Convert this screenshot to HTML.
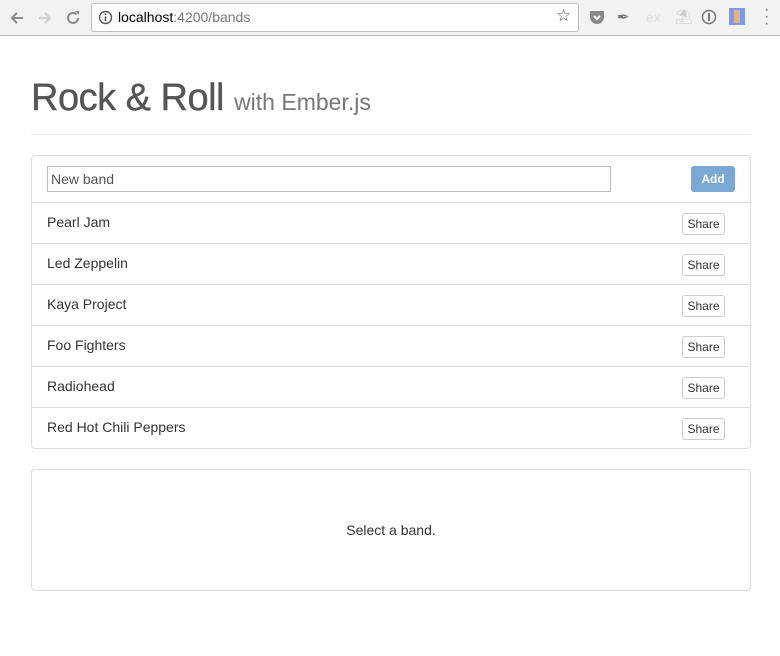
<!DOCTYPE html>
<html><head><style>
*{box-sizing:border-box}
body{margin:0;width:780px;height:656px;background:#fff;font-family:"Liberation Sans",sans-serif;color:#333;position:relative;overflow:hidden}
.bar{position:absolute;left:0;top:0;width:780px;height:36px;background:#f2f2f2;border-bottom:1px solid #b9b9b9}
.url{position:absolute;left:91px;top:3px;width:488px;height:29px;background:#fff;border:1px solid #bfbfbf;border-radius:3px;font-size:14px;line-height:27px;padding-left:26px;color:#000}
.url span{color:#777}
.abs{position:absolute}
h1{position:absolute;left:31px;top:76px;margin:0;font-size:38px;font-weight:normal;color:#555;letter-spacing:-0.5px;line-height:44px;-webkit-text-stroke:0.4px #555}
h1 small{font-size:23px;color:#777;letter-spacing:0;-webkit-text-stroke:0}
.hr{position:absolute;left:31px;top:134px;width:720px;height:1px;background:#eee}
.panel{position:absolute;left:31px;width:720px;border:1px solid #ddd;border-radius:4px}
.row{height:41px;border-top:1px solid #ddd;position:relative;font-size:14px;line-height:39px;padding-left:15px}
.share{position:absolute;left:650px;top:10px;width:43px;height:22px;border:1px solid #ccc;border-radius:3px;font-size:12px;line-height:20px;text-align:center;background:#fff;color:#333}
</style></head><body>
<div class="bar">
<svg class="abs" style="left:8px;top:9px" width="18" height="18" viewBox="0 0 18 18"><path d="M15 9H4M9 4L4 9l5 5" stroke="#8a8a8a" stroke-width="2" fill="none"/></svg>
<svg class="abs" style="left:36px;top:9px" width="18" height="18" viewBox="0 0 18 18"><path d="M3 9h11M9 4l5 5-5 5" stroke="#cfcfcf" stroke-width="2" fill="none"/></svg>
<svg class="abs" style="left:64px;top:9px" width="18" height="18" viewBox="0 0 18 18"><path d="M14 9a5 5 0 1 1-1.5-3.6" stroke="#8a8a8a" stroke-width="2" fill="none"/><path d="M11 2h4v4z" fill="#8a8a8a"/></svg>
<div class="url">localhost<span>:4200/bands</span></div>
<svg class="abs" style="left:98px;top:10px" width="15" height="15" viewBox="0 0 15 15"><circle cx="7.5" cy="7.5" r="6" stroke="#555" stroke-width="1.4" fill="none"/><path d="M7.5 6.5v4.5" stroke="#555" stroke-width="1.6"/><circle cx="7.5" cy="4.3" r="1" fill="#555"/></svg>
<div class="abs" style="left:556px;top:6px;font-size:17px;color:#555">☆</div>
<svg class="abs" style="left:589px;top:9px" width="16" height="16" viewBox="0 0 16 16"><path d="M1 2h14v6a7 7 0 0 1-14 0z" fill="#888"/><path d="M5 7l3 3 3-3" stroke="#fff" stroke-width="2" fill="none"/></svg>
<div class="abs" style="left:617px;top:8px;font-size:15px;color:#777">✒</div>
<div class="abs" style="left:646px;top:9px;font-size:14px;color:#ddd">ex</div>
<div class="abs" style="left:675px;top:8px;font-size:14px;color:#ccc">⛱</div>
<svg class="abs" style="left:701px;top:9px" width="16" height="16" viewBox="0 0 16 16"><circle cx="8" cy="8" r="6.5" stroke="#777" stroke-width="1.5" fill="none"/><path d="M8 4v8" stroke="#777" stroke-width="2"/></svg>
<div class="abs" style="left:729px;top:8px;width:16px;height:17px;background:#7a9cf0"><div style="margin:2px 5px;width:6px;height:13px;background:#e8b080"></div></div>
<div class="abs" style="left:764px;top:6px;font-size:16px;color:#777;line-height:7px">·<br>·<br>·</div>
</div>
<h1>Rock &amp; Roll <small>with Ember.js</small></h1>
<div class="hr"></div>
<div class="panel" style="top:155px;height:294px">
<div style="height:46px;position:relative">
<div class="abs" style="left:15px;top:10px;width:564px;height:26px;border:1px solid #bbb;font-size:14px;line-height:24px;padding-left:3px;color:#555">New band</div>
<div class="abs" style="left:659px;top:10px;width:44px;height:26px;background:#7aa7d4;border-radius:3px;color:#fff;font-size:12px;font-weight:bold;line-height:26px;text-align:center">Add</div>
</div>
<div class="row">Pearl Jam<div class="share">Share</div></div>
<div class="row">Led Zeppelin<div class="share">Share</div></div>
<div class="row">Kaya Project<div class="share">Share</div></div>
<div class="row">Foo Fighters<div class="share">Share</div></div>
<div class="row">Radiohead<div class="share">Share</div></div>
<div class="row">Red Hot Chili Peppers<div class="share">Share</div></div>
</div>
<div class="panel" style="top:469px;height:122px;text-align:center;font-size:14px;line-height:120px">Select a band.</div>
</body></html>
